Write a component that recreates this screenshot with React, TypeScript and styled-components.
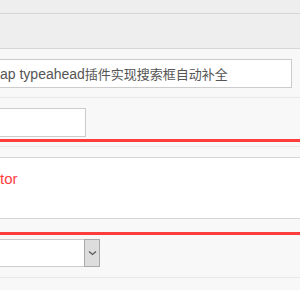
import React, { ReactElement } from "react"
import styled, { createGlobalStyle } from "styled-components"

const colors = {
	band: "#eeeeee",
	panel: "#f8f8f8",
	line: "#d6d6d6",
	lightLine: "#e8e8e8",
	field: "#cccccc",
	red: "#ff3d3d",
	text: "#555555"
}

const GlobalStyle = createGlobalStyle`
	html, body {
		margin: 0;
		padding: 0;
		background: ${colors.panel};
		font-family: "Liberation Sans", Arial, "Noto Sans CJK SC", sans-serif;
		overflow: hidden;
	}
`

const Page = styled.div`
	width: 300px;
	height: 290px;
	overflow: hidden;
	background: ${colors.panel};
`

const Header = styled.div`
	height: 13px;
	background: ${colors.band};
	border-bottom: 1px solid ${colors.line};
`

const Toolbar = styled.div`
	height: 34px;
	background: ${colors.band};
	border-bottom: 1px solid ${colors.line};
`

const Row = styled.div<{ $top: number; $bottom: number; $selected?: boolean }>`
	padding: ${(p) => p.$top}px 0 ${(p) => p.$bottom}px 0;
	border-bottom: ${(p) =>
		p.$selected ? `3px solid ${colors.red}` : `1px solid ${colors.lightLine}`};
`

const Field = styled.div<{ $width: number }>`
	box-sizing: border-box;
	width: ${(p) => p.$width}px;
	height: 29px;
	background: #fff;
	border: 1px solid ${colors.field};
	border-left: none;
	display: flex;
	align-items: center;
	font-size: 14px;
	color: ${colors.text};
	white-space: nowrap;
	overflow: hidden;
`

const Cjk = styled.span`
	font-family: "Noto Sans CJK SC", sans-serif;
	font-size: 13px;
`

const Spacer = styled.div`
	height: 16px;
	box-sizing: border-box;
	padding-top: 4px;
`

const SpacerInner = styled.div`
	height: 12px;
	box-sizing: border-box;
	border-top: 1px solid ${colors.lightLine};
	border-bottom: 1px solid ${colors.line};
`

const Canvas = styled.div`
	height: 61px;
	box-sizing: border-box;
	padding-top: 11px;
	background: #fff;
	border-bottom: 1px solid ${colors.line};
	font-size: 15px;
	line-height: 20px;
	color: ${colors.red};
`

const Gap = styled.div`
	height: 13px;
	border-bottom: 3px solid ${colors.red};
`

const Select = styled.div`
	box-sizing: border-box;
	width: 100px;
	height: 28px;
	display: flex;
	background: #fff;
	border: 1px solid ${colors.field};
	border-left: none;
`

const SelectValue = styled.div`
	flex: 1;
`

const SelectButton = styled.div`
	width: 16px;
	box-sizing: border-box;
	margin: -1px -1px -1px 0;
	background: #dddddd;
	border: 1px solid #aaaaaa;
	display: flex;
	align-items: center;
	justify-content: center;
`

const Chevron = () => (
	<svg width="9" height="6" viewBox="0 0 9 6">
		<path d="M1 1.5 L4.5 4.5 L8 1.5" fill="none" stroke="#555" strokeWidth="1.2" />
	</svg>
)

export default function App(): ReactElement {
	return (
		<Page>
			<GlobalStyle />
			<Header />
			<Toolbar />
			<Row $top={10} $bottom={9}>
				<Field $width={292}>
					ap typeahead<Cjk>插件实现搜索框自动补全</Cjk>
				</Field>
			</Row>
			<Row $top={10} $bottom={2} $selected>
				<Field $width={86} />
			</Row>
			<Spacer>
				<SpacerInner />
			</Spacer>
			<Canvas>tor</Canvas>
			<Gap />
			<Row $top={4} $bottom={10}>
				<Select>
					<SelectValue />
					<SelectButton>
						<Chevron />
					</SelectButton>
				</Select>
			</Row>
		</Page>
	)
}
